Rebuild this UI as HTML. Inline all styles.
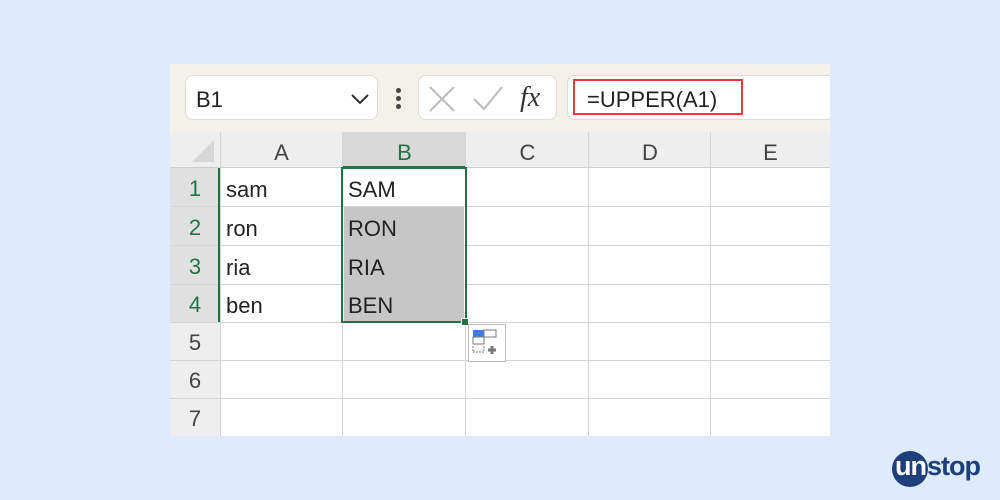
<!DOCTYPE html><html><head><style>
*{margin:0;padding:0;box-sizing:border-box}
body{width:1000px;height:500px;background:#ddebfc;position:relative;overflow:hidden;font-family:"Liberation Sans",sans-serif}
.a{position:absolute}
.t{font-size:22px;color:#222}
.h{font-size:22px;color:#444;text-align:center}
</style></head><body>
<div class="a" style="left:170px;top:64px;width:660px;height:68px;background:#f3f1e9;overflow:hidden">
<div class="a" style="left:397px;top:11px;width:280px;height:45px;background:#fff;border:1px solid #dcdcd4;border-radius:8px"></div>
</div>
<div class="a" style="left:185px;top:75px;width:193px;height:45px;background:#fff;border:1px solid #dcdcd4;border-radius:8px"></div>
<div class="a t" style="left:196px;top:87px;font-size:22px">B1</div>
<svg class="a" style="left:350px;top:93px" width="20" height="12"><path d="M2 2l8 8 8-8" stroke="#333" stroke-width="2" fill="none"/></svg>
<div class="a" style="left:396px;top:88px;width:5px;height:5px;border-radius:50%;background:#444;box-shadow:0 8px #444,0 16px #444"></div>
<div class="a" style="left:418px;top:75px;width:139px;height:45px;background:#fff;border:1px solid #dcdcd4;border-radius:8px"></div>
<svg class="a" style="left:428px;top:85px" width="100" height="28"><path d="M2 2l24 24M26 2L2 26" stroke="#bbb" stroke-width="2"/><path d="M46 14l10 10 18-22" stroke="#bbb" stroke-width="2" fill="none"/></svg>
<div class="a" style="left:520px;top:82px;font-family:'Liberation Serif',serif;font-style:italic;font-size:28px;color:#333">fx</div>
<div class="a" style="left:573px;top:79px;width:170px;height:36px;border:2px solid #e83a3a"></div>
<div class="a t" style="left:587px;top:87px">=UPPER(A1)</div>
<!-- grid -->
<div class="a" style="left:170px;top:132px;width:660px;height:304px;background:#fff"></div>
<div class="a" style="left:170px;top:132px;width:660px;height:36px;background:#eeeeee;border-bottom:1px solid #ccc"></div>
<div class="a" style="left:343px;top:132px;width:123px;height:36px;background:#d9d9d9;border-bottom:2px solid #217346"></div>
<svg class="a" style="left:190px;top:138px" width="26" height="26"><path d="M24 2V24H2Z" fill="#d6d6d6"/></svg>
<div class="a" style="left:170px;top:168px;width:50px;height:268px;background:#eeeeee"></div>
<div class="a" style="left:170px;top:168px;width:50px;height:154px;background:#e0e0e0"></div>
<div class="a h" style="left:220px;top:140px;width:123px">A</div>
<div class="a h" style="left:343px;top:140px;width:123px;color:#217346">B</div>
<div class="a h" style="left:466px;top:140px;width:123px">C</div>
<div class="a h" style="left:589px;top:140px;width:122px">D</div>
<div class="a h" style="left:711px;top:140px;width:119px">E</div>
<div class="a" style="left:220px;top:132px;width:1px;height:304px;background:#d4d4d4"></div>
<div class="a" style="left:342px;top:132px;width:1px;height:304px;background:#d4d4d4"></div>
<div class="a" style="left:465px;top:132px;width:1px;height:304px;background:#d4d4d4"></div>
<div class="a" style="left:588px;top:132px;width:1px;height:304px;background:#d4d4d4"></div>
<div class="a" style="left:710px;top:132px;width:1px;height:304px;background:#d4d4d4"></div>
<div class="a" style="left:170px;top:206px;width:660px;height:1px;background:#d4d4d4"></div>
<div class="a" style="left:170px;top:245px;width:660px;height:1px;background:#d4d4d4"></div>
<div class="a" style="left:170px;top:284px;width:660px;height:1px;background:#d4d4d4"></div>
<div class="a" style="left:170px;top:322px;width:660px;height:1px;background:#d4d4d4"></div>
<div class="a" style="left:170px;top:360px;width:660px;height:1px;background:#d4d4d4"></div>
<div class="a" style="left:170px;top:398px;width:660px;height:1px;background:#d4d4d4"></div>
<div class="a h" style="left:170px;top:176px;width:50px;color:#217346">1</div>
<div class="a h" style="left:170px;top:215px;width:50px;color:#217346">2</div>
<div class="a h" style="left:170px;top:254px;width:50px;color:#217346">3</div>
<div class="a h" style="left:170px;top:292px;width:50px;color:#217346">4</div>
<div class="a h" style="left:170px;top:330px;width:50px">5</div>
<div class="a h" style="left:170px;top:368px;width:50px">6</div>
<div class="a h" style="left:170px;top:406px;width:50px">7</div>
<div class="a" style="left:218px;top:168px;width:2px;height:154px;background:#217346"></div>
<div class="a" style="left:344px;top:207px;width:120px;height:114px;background:#c6c6c6"></div>
<div class="a" style="left:341px;top:167px;width:126px;height:156px;border:2px solid #217346"></div>
<div class="a" style="left:461px;top:318px;width:8px;height:8px;background:#217346;border:1px solid #fff"></div>
<div class="a t" style="left:226px;top:177px">sam</div>
<div class="a t" style="left:226px;top:216px">ron</div>
<div class="a t" style="left:226px;top:255px">ria</div>
<div class="a t" style="left:226px;top:293px">ben</div>
<div class="a t" style="left:348px;top:177px">SAM</div>
<div class="a t" style="left:348px;top:216px">RON</div>
<div class="a t" style="left:348px;top:255px">RIA</div>
<div class="a t" style="left:348px;top:293px">BEN</div>
<div class="a" style="left:468px;top:324px;width:38px;height:38px;background:#fff;border:1px solid #bbb"></div>
<svg class="a" style="left:472px;top:329px" width="30" height="28"><rect x="1" y="1" width="11" height="7" fill="#3b7bf0"/><rect x="12" y="1" width="12" height="7" fill="#fff" stroke="#777"/><rect x="1" y="8" width="11" height="7" fill="#fff" stroke="#777"/><path d="M1 17v6h11v-6" stroke="#777" stroke-dasharray="2 1" fill="none"/><path d="M20 17v8M16 21h8" stroke="#777" stroke-width="3"/></svg>
<div class="a" style="left:892px;top:451px;width:36px;height:36px;border-radius:50%;background:#1d3f7a"></div>
<div class="a" style="left:895px;top:451px;font-size:27px;font-weight:bold;color:#fff;letter-spacing:-1px">un</div>
<div class="a" style="left:927px;top:451px;font-size:27px;font-weight:bold;color:#1d3f7a;letter-spacing:-1px">stop</div>
</body></html>
